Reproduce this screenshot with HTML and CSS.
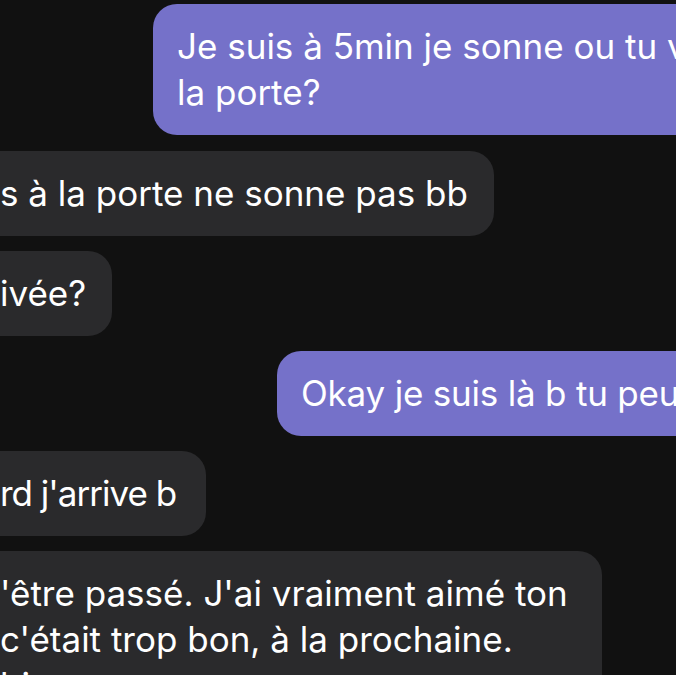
FILE: index.html
```html
<!DOCTYPE html>
<html lang="fr">
<head>
    <meta charset="UTF-8">
    <meta name="viewport" content="width=device-width, initial-scale=1.0">
    <title>Conversation</title>
    <link rel="stylesheet" href="styles.css">
</head>
<body>
    <div class="chat">
        <div class="bubble sent first">Je suis à 5min je sonne ou tu viens<br>la porte?</div>
        <div class="bubble received">s à la porte ne sonne pas bb</div>
        <div class="bubble received">ivée?</div>
        <div class="bubble sent second">Okay je suis là b tu peux ouvrir</div>
        <div class="bubble received tight">rd j'arrive b</div>
        <div class="bubble received long">'être passé. J'ai vraiment aimé ton<br>c'était trop bon, à la prochaine.<br>bisous</div>
    </div>
</body>
</html>
```

FILE: styles.css
```css
* {
    margin: 0;
    padding: 0;
    box-sizing: border-box;
}

body {
    background-color: #111111;
    color: #fff;
    font-family: 'Inter', 'Noto Sans', sans-serif;
    width: 676px;
    height: 675px;
    overflow: hidden;
}

.chat {
    display: flex;
    flex-direction: column;
    align-items: flex-start;
    gap: 15px;
    padding-top: 4px;
}

.bubble {
    font-size: 35px;
    line-height: 46px;
    padding: 19px 26px 20px 24px;
    border-radius: 24px;
    white-space: nowrap;
}

.sent {
    background-color: #7571c9;
}

.sent.first {
    margin-left: 153px;
    margin-bottom: 1px;
}

.sent.second {
    margin-left: 277px;
    letter-spacing: -0.2px;
}

.received {
    background-color: #2a2a2c;
    margin-left: -24px;
}

.received.tight {
    letter-spacing: -1px;
    padding-right: 30px;
}

.received.long {
    padding-right: 34px;
}
```
